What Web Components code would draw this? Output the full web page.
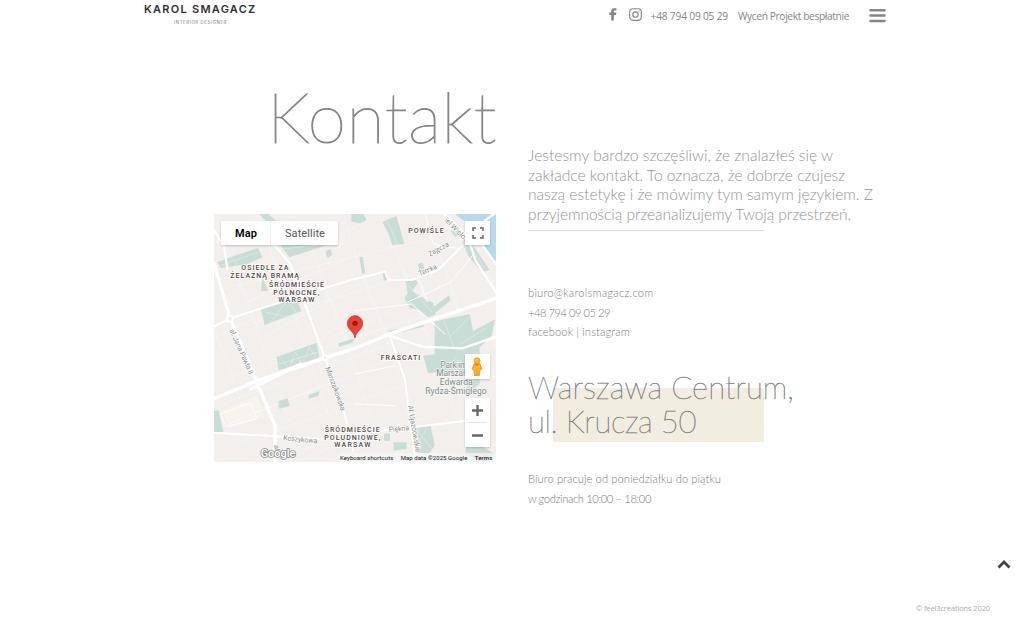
<!DOCTYPE html>
<html lang="pl"><head><meta charset="utf-8"><title>Kontakt – Karol Smagacz</title>
<style>html,body{margin:0;height:100%;overflow:hidden;background:#fff;font-family:Lato,"Liberation Sans",sans-serif;color:#8c8c8c}</style></head>
<body><contact-page></contact-page>
<script>
// One line of text, tracked out to a given measure.
customElements.define('fit-line', class extends HTMLElement{
 connectedCallback(){
  const r=this.shadowRoot||this.attachShadow({mode:'open'});
  r.innerHTML='<style>:host{display:block;white-space:pre}span{display:inline-block;transform-origin:0 50%}</style><span><slot></slot></span>';
  const s=r.querySelector('span'),w=+this.getAttribute('w');
  const fit=()=>{s.style.letterSpacing='0px';const n=this.textContent.length;
   const d=w-s.getBoundingClientRect().width; s.style.letterSpacing=(d/n)+'px';};
  fit();
 }
});
customElements.define('site-header', class extends HTMLElement{
 constructor(){super();this.attachShadow({mode:'open'}).innerHTML=`<style>
 :host{display:flex;height:32px;padding:0 138px 0 144px;justify-content:space-between;align-items:flex-start}
 .logo{width:112px;text-align:center}.name{font:600 11px/13px Inter,sans-serif;color:#303030;margin-top:3px}
 .sub{font:400 4.300px/6px Inter,sans-serif;color:#777;margin:4px 0 0 30px;text-align:left}
 nav{display:flex;align-items:flex-start;font:400 10.200px/14px "Open Sans",sans-serif;color:#858585}
 .f{margin:8px 12px 0 0}.i{margin:8px 9px 0 0}.p{margin:8.500px 10px 0 0}.w{margin:8.500px 20px 0 0}.m{margin-top:9px}
 svg{display:block}</style>
 <div class="logo"><fit-line class="name" w="112.500">KAROL SMAGACZ</fit-line><fit-line class="sub" w="53">INTERIOR DESIGNER</fit-line></div>
 <nav><svg class="f" width="8" height="13" viewBox="0 0 8 13"><path d="M2.200 12.500V7H.2V4.600h2V3.200C2.200 1.200 3.300.2 5.200.2l2.200.1v2.100H6c-1 0-1.200.4-1.200 1.100v1.100h2.500L7 7H4.800v5.500z" fill="#858585"/></svg>
 <svg class="i" width="13" height="13" viewBox="0 0 13 13" fill="none" stroke="#858585" stroke-width="1.150"><rect x=".7" y=".7" width="11.600" height="11.600" rx="3.300"/><circle cx="6.500" cy="6.500" r="2.700"/><circle cx="9.900" cy="3.100" r=".7" fill="#858585" stroke="none"/></svg>
 <fit-line class="p" w="77.500">+48 794 09 05 29</fit-line><fit-line class="w" w="111">Wyceń Projekt bespłatnie</fit-line>
 <svg class="m" width="17" height="14" viewBox="0 0 17 14" stroke="#858585" stroke-width="2.500" stroke-linecap="round"><path d="M1.500 1.300h14M1.500 6.600h14M1.500 12h14"/></svg></nav>`}
});
customElements.define('city-map', class extends HTMLElement{
 constructor(){super();
 let streets='';
 for(let i=0;i<25;i++){const y=-10+i*38;streets+=`<path d="M${(i*71)%160-20} ${y+120}L${330+(i*97)%330} ${y-18-(i*29)%80}"/>`;}
 for(let i=0;i<23;i++){const x=-120+i*43;streets+=`<path d="M${x} ${(i*113)%330}l${80+(i%3)*20} ${240+(i%3)*60}"/>`;}
 this.attachShadow({mode:'open'}).innerHTML=`<style>
 :host{display:block;position:relative;width:282px;height:248px;font-family:Roboto,sans-serif}svg{display:block}
 .types,.full,.man,.zoom{position:absolute;background:#fff;box-shadow:0 1px 2px #0003}
 .types{left:7px;top:7px;width:117px;height:24px;display:flex;line-height:25px;font-size:11px;color:#565656}
 .types b{box-sizing:border-box;width:50px;padding-left:14px;color:#000;border-right:1px solid #eee;font-weight:600}.types fit-line{margin-left:14px}
 .full,.man{left:251px;width:25px;height:24px;display:grid;place-items:center}.full{top:7px}.man{top:140px;height:25px}
 .man svg{margin-left:-1px}
 .zoom{left:251px;top:184px;width:25px;height:49px}
 text{font-family:Roboto,sans-serif}</style>
 <svg width="282" height="248" viewBox="0 0 846 744">
 <rect width="846" height="744" fill="#f2efed"/>
 <g fill="#f7f4ee"><path d="M25 590L130 545 150 605 45 645ZM825 365l21-40v80z"/></g>
 <g fill="none" stroke="#fff" stroke-width="1.800" opacity=".65">${streets}</g>
 <g fill="#c9ddd7">
 <path d="M10 145L70 122 132 102 145 130 100 150 20 162ZM135 0h28l24 20-26 6ZM200 92L330 70 350 90 225 130ZM336 110l14-4 4 16-12 10-6-8ZM145 190l18 40-22 2ZM140 282l106-33 16 42-110 42ZM412 0h36l10 18-20 10-26-5Z"/>
 <path d="M505 24l42-18 12 40 12 44-36 4-12-36ZM436 130l10-2 8 50-10 2ZM506 178l14-2 2 22-12 2ZM612 150l14-4 6 22-16 4ZM710 52l20-10 10 16-16 12ZM745 82l20-6 62 92-22 6-40-44ZM573 196l30-2 8 14-16 22 36 24 26 12 8 36-22 8-28-22-28-6-16-30 10-14ZM655 282l50-38 4 16-50 40ZM522 350l108-20-2 8-90 22Z"/>
 <path d="M662 323l50-12 55-10 10 50 66-35-10 50-36 34 0 110-40 30 0 60 38 10-3 80 50 30-30 24-60-20 22-110-20-80 12-40-50-22-74 5-14-52 34-4Z"/>
 <path d="M188 429L308 386 316 431 194 469ZM374 388l48-16-6 14-42 12ZM193 562l28-9 6 23-32 8ZM284 542l32-10-2 14-30 8ZM0 591l14-2 14 64-28 4ZM608 640l42-5 12 60-18 25-44-5ZM538 685h40v20l-38 5ZM510 660l18-2v22h-18Z"/></g>
 <g fill="none" stroke="#eaf2ef" stroke-width="1.500"><path d="M20 155l110-40M50 130l20 20M155 295l100 20M170 325l50-65 30 40M205 105l110-12M520 20l30 70M200 430l25 35 20-50 20 40 20-55 20 30M195 450l115-35M610 650l45 55M640 640l-35 60M770 305l-60 60M820 340l-80 50M720 430l80 90M800 420l-60 190M750 500l60 90M690 320l30 80M575 205l80 90M760 85l55 80"/></g>
 <path d="M723 0h123v143L805 93 772 38Z" fill="#b7d9ee"/>
 <g fill="none" stroke="#fff" stroke-linecap="round" stroke-linejoin="round">
 <path d="M0 554L130 500 333 431 423 403 533 358 846 253" stroke-width="11"/>
 <path d="M110 525L260 450M0 148L48 313 88 406 138 526 183 636V744" stroke-width="10"/>
 <path d="M0 338L48 313 268 243 411 198 513 173 523 198H593L673 168 743 98M168 78L228 148 308 365 333 431 393 606 418 710M525 360L573 496 603 736M0 656L333 676M423 660L753 621" stroke-width="6"/>
 <path d="M690 0L760 65 785 140 846 235M740 75L846-5M795 80l51 70M530 366l95 32 120 5 101-35M0 50l30 45 10 70" stroke-width="7"/>
 <path d="M615 198l25 65M580 265l130-60 65-80M423 290l170-20 100 90M423 480l120-25M423 570l120 5M633 0l25 90 80 15M20 600l90-34 18 48-90 24Z" stroke-width="3"/></g>
 <circle cx="48" cy="314" r="9" fill="#f2efed" stroke="#fff" stroke-width="6"/><circle cx="333" cy="431" r="7" fill="#f2efed" stroke="#fff" stroke-width="5"/>
 <g font-size="22" fill="#8b8b8b" stroke="#fff" stroke-width="4" paint-order="stroke">
 <text transform="translate(46 349) rotate(66)" textLength="146">al. Jana Pawła II</text>
 <text transform="translate(334 462) rotate(70)" textLength="138">Marszałkowska</text>
 <text transform="translate(207 679) rotate(5)" textLength="103">Koszykowa</text>
 <text transform="translate(648 128) rotate(-29)" textLength="67">Zajęcza</text><text transform="translate(617 186) rotate(-23)" textLength="58">Tamka</text>
 <text transform="translate(525 654) rotate(-5)" textLength="61">Piękna</text>
 <text transform="translate(581 575) rotate(80)" textLength="142">Al. Ujazdowskie</text>
 <text transform="translate(690 20) rotate(45)" textLength="106">iel Wisłostr</text><text transform="translate(180 694) rotate(82)">al.</text></g>
 <g font-size="26" fill="#838987" stroke="#f4f7f5" stroke-width="4" paint-order="stroke"><text x="679" y="461" textLength="88">Park im.</text><text x="667" y="487" textLength="112">Marszałka</text><text x="677" y="513" textLength="99">Edwarda</text><text x="634" y="539" textLength="184">Rydza-Śmigłego</text></g>
 <g font-size="21" font-weight="500" fill="#544641" stroke="#fff" stroke-width="4" paint-order="stroke">
 <text x="82" y="168" textLength="141">OSIEDLE ZA</text><text x="49" y="191" textLength="206">ŻELAZNĄ BRAMĄ</text>
 <text x="165" y="220" textLength="165">ŚRÓDMIEŚCIE</text><text x="178" y="242" textLength="138">PÓŁNOCNE,</text><text x="193" y="264" textLength="108">WARSAW</text>
 <text x="583" y="58" textLength="106">POWIŚLE</text><text x="500" y="438" textLength="119">FRASCATI</text>
 <text x="332" y="655" textLength="165">ŚRÓDMIEŚCIE</text><text x="331" y="677" textLength="168">POŁUDNIOWE,</text><text x="361" y="699" textLength="108">WARSAW</text></g>
 <path d="M423 372C420 350 400 349 400 328a23 23 0 0 1 46 0C446 349 426 350 423 372Z" fill="#ea4335" stroke="#c5221f" stroke-width="2"/><circle cx="423" cy="328" r="8" fill="#a31512"/>
 <text x="140" y="729" font-size="33" font-weight="500" textLength="104" fill="#fff" stroke="#8f8f8f" stroke-width="5" paint-order="stroke">Google</text>
 <path d="M374 717h472v27H374Z" fill="#f5f5f5" opacity=".75"/>
 <g font-size="18" fill="#111"><text x="378" y="737" textLength="160">Keyboard shortcuts</text><text x="560" y="737" textLength="200">Map data ©2025 Google</text><text x="782" y="737" font-weight="500" textLength="53">Terms</text></g>
 </svg>
 <div class="types"><b><fit-line w="22" style="margin:0">Map</fit-line></b><fit-line w="40">Satellite</fit-line></div>
 <div class="full"><svg width="12" height="12" fill="none" stroke="#666" stroke-width="1.500"><path d="M1 4V1h3M8 1h3v3M11 8v3H8M4 11H1V8"/></svg></div>
 <div class="man"><svg width="12" height="19" viewBox="0 0 12 19"><path d="M3 7Q6 5 9 7L11 12 9 13 8.500 18.500H3.500L3 13 1 12Z" fill="#fbb62b" stroke="#d78a14" stroke-width=".7"/><circle cx="6" cy="3.800" r="3" fill="#fbb62b" stroke="#d78a14" stroke-width=".6"/><path d="M3.800 7h4.400L6 9.200Z" fill="#e58019"/><path d="M6 13v5" stroke="#d78a14" stroke-width=".7"/></svg></div>
 <div class="zoom"><svg width="25" height="49"><path d="M7 12.500h11M12.500 7v11M7 37.500h11" stroke="#666" stroke-width="2.300"/><path d="M3 24.500h19" stroke="#e6e6e6"/></svg></div>`}
});
customElements.define('contact-info', class extends HTMLElement{
 constructor(){super();this.attachShadow({mode:'open'}).innerHTML=`<style>
 :host{display:block;padding-top:114px;color:#858585}
 .intro{font:300 15.600px/19.600px Lato,sans-serif;color:#949494;height:84px;box-sizing:border-box;width:346px}
 hr{width:236px;height:1px;border:0;margin:0;background:#ddd}
 .links,.hours{font:300 11.200px/19.600px Lato,sans-serif;color:#7c7c7c}.links{margin-top:52px}
 .address{margin-top:28px;font:100 31px/34.500px Lato,sans-serif;color:#808080;-webkit-text-stroke:.45px #808080;height:72px;background:linear-gradient(#f1ede0,#f1ede0) 25px 18px/211px 54px no-repeat}
 .hours{margin-top:27.500px}</style>
 <div class="intro"><fit-line w="305">Jestesmy bardzo szczęśliwi, że znalazłeś się w</fit-line><fit-line w="317">zakładce kontakt. To oznacza, że dobrze czujesz</fit-line><fit-line w="345">naszą estetykę i że mówimy tym samym językiem. Z</fit-line><fit-line w="323">przyjemnością przeanalizujemy Twoją przestrzeń.</fit-line></div><hr>
 <div class="links"><fit-line w="125.500">biuro@karolsmagacz.com</fit-line><fit-line w="82">+48 794 09 05 29</fit-line><fit-line w="102">facebook | instagram</fit-line></div>
 <div class="address"><fit-line w="266">Warszawa Centrum,</fit-line><fit-line w="168">ul. Krucza 50</fit-line></div>
 <div class="hours"><fit-line w="193">Biuro pracuje od poniedziałku do piątku</fit-line><fit-line w="123">w godzinach 10:00 – 18:00</fit-line></div>`}
});
customElements.define('contact-page', class extends HTMLElement{
 constructor(){super();this.attachShadow({mode:'open'}).innerHTML=`<style>
 :host{display:flex;flex-direction:column;height:632px}
 main{display:grid;grid-template-columns:282px 346px;gap:32px;padding-left:214px;height:518px}
 h1{margin:44px 0 0 53px;height:138px;font:100 70px/80px Lato,sans-serif;color:#858585;-webkit-text-stroke:.9px #858585}
 footer{display:flex;flex-direction:column;align-items:flex-end;padding:8px 13px 0 0}
 footer svg{display:block}footer fit-line{font:400 7.500px/12px "Open Sans",sans-serif;color:#aaa;margin:32px 21px 0 0}</style>
 <site-header></site-header><main><section><h1><fit-line w="230">Kontakt</fit-line></h1><city-map></city-map></section><contact-info></contact-info></main>
 <footer><svg width="14" height="12" fill="none" stroke="#444" stroke-width="2.800"><path d="M1.500 9.500L7 4l5.500 5.500"/></svg><fit-line w="74">© feel3creations 2020</fit-line></footer>`}
});
</script></body></html>
